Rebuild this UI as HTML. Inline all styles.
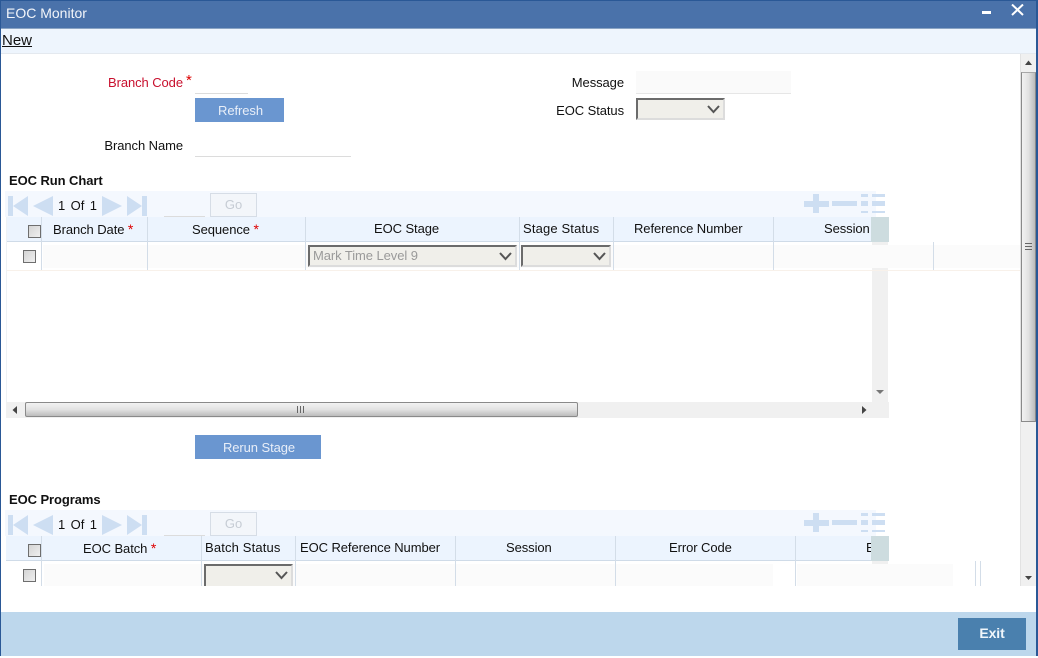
<!DOCTYPE html>
<html><head><meta charset="utf-8"><title>EOC Monitor</title>
<style>
html,body{margin:0;padding:0;background:#fff;}
body{width:1038px;height:658px;position:relative;overflow:hidden;font-family:"Liberation Sans",sans-serif;font-size:13px;letter-spacing:-0.08px;color:#111;}
.a,.t,.r,.c{position:absolute;}
.t,.r,.c{white-space:nowrap;line-height:16px;}
.r{text-align:right;}
.c{text-align:center;}
.red{color:#d00;font-size:14px;}
.sel{position:absolute;box-sizing:border-box;background:#f0efea;border-style:solid;border-width:2px;border-color:#6b6b6b #dcdcdc #dcdcdc #6b6b6b;}
.sel svg{position:absolute;top:5px;right:3px;}
.cb{position:absolute;box-sizing:border-box;width:13px;height:13px;border:1px solid #6e6e6e;background:linear-gradient(135deg,#d4d4d4,#efefef);}
.vl{position:absolute;width:1px;background:#d3dde8;}
.btn{position:absolute;background:#6a96d0;color:#e8eef8;text-align:center;font-size:13px;line-height:25px;padding-left:2px;box-sizing:border-box;}
</style></head><body>
<!-- window frame -->
<div class="a" style="left:0;top:0;width:1038px;height:28px;background:#4a72aa;border-top:1px solid #2a5896;box-sizing:border-box;"></div>
<div class="a" style="left:0;top:28px;width:1038px;height:1px;background:#8aa4c4;"></div>
<div class="t" style="left:6px;top:5px;color:#f2f5fa;font-size:14px;letter-spacing:0;">EOC Monitor</div>
<div class="a" style="left:982px;top:11px;width:9px;height:3px;background:#fff;"></div>
<svg class="a" style="left:1011px;top:4px;" width="13" height="12"><path d="M1 0.5L12 11M12 0.5L1 11" stroke="#fff" stroke-width="2" fill="none"/></svg>
<div class="a" style="left:0;top:29px;width:1038px;height:24px;background:#eef5fd;"></div>
<div class="a" style="left:0;top:53px;width:1038px;height:1px;background:#e4e9ef;"></div>
<div class="t" style="left:2px;top:33px;font-size:15px;letter-spacing:0;text-decoration:underline;color:#111;">New</div>
<div class="a" style="left:0;top:0;width:1px;height:656px;background:#2a5896;"></div>
<div class="a" style="left:1036px;top:0;width:2px;height:656px;background:#2a5896;"></div>

<!-- main scrollbar -->
<div class="a" style="left:1020px;top:54px;width:16px;height:532px;background:#f0f0f0;border-left:1px solid #e2e2e2;box-sizing:border-box;"></div>
<div class="a" style="left:1021px;top:72px;width:15px;height:350px;box-sizing:border-box;border:1px solid #8a8a8a;border-top-color:#a8a8a8;background:linear-gradient(90deg,#f2f2f2,#e2e2e2 50%,#bcbcbc);"></div>
<svg class="a" style="left:1024px;top:60px;" width="9" height="6"><path d="M4.5 0.5L8 5H1z" fill="#444"/></svg>
<svg class="a" style="left:1024px;top:575px;" width="9" height="6"><path d="M1 1H8L4.5 5z" fill="#444"/></svg>
<svg class="a" style="left:1025px;top:243px;" width="7" height="7"><path d="M0 .5H7M0 3.5H7M0 6.5H7" stroke="#666" stroke-width="1"/></svg>

<!-- form -->
<div class="r" style="right:855px;top:75px;color:#c8102e;">Branch Code</div>
<div class="t" style="left:186px;top:73px;color:#d00;font-size:15px;">*</div>
<div class="a" style="left:195px;top:93px;width:53px;height:1px;background:#dcdcdc;"></div>
<div class="btn" style="left:195px;top:98px;width:89px;height:24px;">Refresh</div>
<div class="r" style="right:855px;top:138px;">Branch Name</div>
<div class="a" style="left:195px;top:156px;width:156px;height:1px;background:#dcdcdc;"></div>
<div class="r" style="right:414px;top:75px;">Message</div>
<div class="a" style="left:636px;top:71px;width:155px;height:22px;background:#fafafa;border-bottom:1px solid #e6e6e6;"></div>
<div class="r" style="right:414px;top:103px;">EOC Status</div>
<div class="sel" style="left:636px;top:98px;width:89px;height:22px;"><svg width="13" height="9"><path d="M1 1L6.5 7L12 1" stroke="#555" stroke-width="2" fill="none"/></svg></div>

<!-- EOC Run Chart -->
<div class="t" style="left:9px;top:173px;font-weight:bold;font-size:13px;">EOC Run Chart</div>
<div class="a" style="left:5px;top:191px;width:871px;height:26px;background:#f4f8fe;"></div>
<svg class="a" style="left:8px;top:196px;" width="140" height="20" fill="#cddef2"><rect x="0" y="0" width="5" height="20"/><path d="M20 0V20L5 10z"/><path d="M45 0V20L25 10z"/><path d="M94 0V20L114 10z"/><path d="M119 0V20L134 10z"/><rect x="134" y="0" width="5" height="20"/></svg>
<div class="t" style="left:58px;top:198px;font-size:13px;word-spacing:2px;">1 Of 1</div>
<div class="a" style="left:164px;top:216px;width:41px;height:1px;background:#dcdcdc;"></div>
<div class="a" style="left:210px;top:193px;width:47px;height:24px;box-sizing:border-box;border:1px solid #d6dde6;background:#f3f6fa;color:#c6ccd4;text-align:center;line-height:22px;font-size:13px;">Go</div>
<svg class="a" style="left:804px;top:194px;" width="82" height="20" fill="#cddef2"><rect x="0" y="7" width="25" height="6"/><rect x="9" y="0" width="6" height="19"/><rect x="28" y="7" width="25" height="5"/><rect x="57" y="0" width="7" height="3"/><rect x="57" y="7" width="7" height="5"/><rect x="57" y="17" width="7" height="2"/><rect x="68" y="0" width="13" height="3"/><rect x="68" y="7" width="13" height="5"/><rect x="68" y="17" width="13" height="2"/></svg>

<div class="a" style="left:6px;top:217px;width:865px;height:24px;background:#ecf4fe;"></div>
<div class="a" style="left:6px;top:241px;width:865px;height:1px;background:#cfdbe8;"></div>
<div class="a" style="left:872px;top:242px;width:16px;height:160px;background:#f0f0f0;"></div>
<div class="a" style="left:43px;top:245px;width:977px;height:23px;background:#fbfbfb;"></div>
<div class="a" style="left:6px;top:270px;width:1014px;height:1px;background:#f8f1ea;"></div>
<div class="a" style="left:6px;top:217px;width:1px;height:186px;background:#eef1f4;"></div>
<div class="vl" style="left:41px;top:217px;height:53px;"></div>
<div class="vl" style="left:147px;top:217px;height:53px;"></div>
<div class="vl" style="left:305px;top:217px;height:53px;"></div>
<div class="vl" style="left:519px;top:217px;height:53px;"></div>
<div class="vl" style="left:613px;top:217px;height:53px;"></div>
<div class="vl" style="left:773px;top:217px;height:53px;"></div>
<div class="vl" style="left:933px;top:242px;height:28px;"></div>
<div class="cb" style="left:28px;top:225px;"></div>
<div class="cb" style="left:23px;top:250px;"></div>
<div class="t" style="left:53px;top:221px;">Branch Date <span class="red">*</span></div>
<div class="t" style="left:192px;top:221px;">Sequence <span class="red">*</span></div>
<div class="t" style="left:374px;top:221px;">EOC Stage</div>
<div class="t" style="left:523px;top:221px;letter-spacing:.15px;">Stage Status</div>
<div class="t" style="left:634px;top:221px;">Reference Number</div>
<div class="t" style="left:824px;top:221px;">Session</div>
<div class="a" style="left:871px;top:217px;width:18px;height:25px;background:#cddcdf;"></div>
<div class="sel" style="left:308px;top:245px;width:209px;height:22px;color:#9a9a9a;line-height:18px;padding-left:3px;">Mark Time Level 9<svg width="13" height="9"><path d="M1 1L6.5 7L12 1" stroke="#555" stroke-width="2" fill="none"/></svg></div>
<div class="sel" style="left:521px;top:245px;width:90px;height:22px;"><svg width="13" height="9"><path d="M1 1L6.5 7L12 1" stroke="#555" stroke-width="2" fill="none"/></svg></div>
<svg class="a" style="left:875px;top:389px;" width="10" height="6"><path d="M1 1H9L5 5z" fill="#777"/></svg>
<div class="a" style="left:6px;top:402px;width:883px;height:16px;background:#f0f0f0;"></div>
<div class="a" style="left:25px;top:402px;width:553px;height:15px;box-sizing:border-box;border:1px solid #8a8a8a;border-radius:2px;background:linear-gradient(180deg,#f2f2f2,#e2e2e2 50%,#bcbcbc);"></div>
<svg class="a" style="left:297px;top:406px;" width="8" height="7"><path d="M.5 0V7M3.5 0V7M6.5 0V7" stroke="#666" stroke-width="1"/></svg>
<svg class="a" style="left:12px;top:406px;" width="6" height="8"><path d="M5 0V8L0.5 4z" fill="#444"/></svg>
<svg class="a" style="left:861px;top:406px;" width="6" height="8"><path d="M1 0V8L5.5 4z" fill="#444"/></svg>

<div class="btn" style="left:195px;top:435px;width:126px;height:24px;">Rerun Stage</div>

<!-- EOC Programs -->
<div class="t" style="left:9px;top:492px;font-weight:bold;font-size:13px;">EOC Programs</div>
<div class="a" style="left:5px;top:510px;width:871px;height:26px;background:#f4f8fe;"></div>
<svg class="a" style="left:8px;top:515px;" width="140" height="20" fill="#cddef2"><rect x="0" y="0" width="5" height="20"/><path d="M20 0V20L5 10z"/><path d="M45 0V20L25 10z"/><path d="M94 0V20L114 10z"/><path d="M119 0V20L134 10z"/><rect x="134" y="0" width="5" height="20"/></svg>
<div class="t" style="left:58px;top:517px;font-size:13px;word-spacing:2px;">1 Of 1</div>
<div class="a" style="left:164px;top:535px;width:41px;height:1px;background:#dcdcdc;"></div>
<div class="a" style="left:210px;top:512px;width:47px;height:24px;box-sizing:border-box;border:1px solid #d6dde6;background:#f3f6fa;color:#c6ccd4;text-align:center;line-height:22px;font-size:13px;">Go</div>
<svg class="a" style="left:804px;top:513px;" width="82" height="20" fill="#cddef2"><rect x="0" y="7" width="25" height="6"/><rect x="9" y="0" width="6" height="19"/><rect x="28" y="7" width="25" height="5"/><rect x="57" y="0" width="7" height="3"/><rect x="57" y="7" width="7" height="5"/><rect x="57" y="17" width="7" height="2"/><rect x="68" y="0" width="13" height="3"/><rect x="68" y="7" width="13" height="5"/><rect x="68" y="17" width="13" height="2"/></svg>

<div class="a" style="left:6px;top:536px;width:865px;height:24px;background:#ecf4fe;"></div>
<div class="a" style="left:6px;top:560px;width:865px;height:1px;background:#cfdbe8;"></div>
<div class="a" style="left:872px;top:561px;width:16px;height:3px;background:#f0f0f0;"></div>
<div class="a" style="left:44px;top:564px;width:729px;height:22px;background:#fbfbfb;"></div>
<div class="a" style="left:797px;top:564px;width:156px;height:22px;background:#fbfbfb;"></div>
<div class="vl" style="left:41px;top:536px;height:50px;"></div>
<div class="vl" style="left:201px;top:536px;height:50px;"></div>
<div class="vl" style="left:295px;top:536px;height:50px;"></div>
<div class="vl" style="left:455px;top:536px;height:50px;"></div>
<div class="vl" style="left:615px;top:536px;height:50px;"></div>
<div class="vl" style="left:795px;top:536px;height:50px;"></div>
<div class="vl" style="left:975px;top:561px;height:25px;"></div>
<div class="vl" style="left:980px;top:561px;height:25px;"></div>
<div class="cb" style="left:28px;top:544px;"></div>
<div class="cb" style="left:23px;top:569px;"></div>
<div class="t" style="left:83px;top:540px;">EOC Batch <span class="red">*</span></div>
<div class="t" style="left:205px;top:540px;letter-spacing:.15px;">Batch Status</div>
<div class="t" style="left:300px;top:540px;">EOC Reference Number</div>
<div class="t" style="left:506px;top:540px;">Session</div>
<div class="t" style="left:669px;top:540px;">Error Code</div>
<div class="t" style="left:866px;top:540px;">E</div>
<div class="a" style="left:871px;top:536px;width:18px;height:25px;background:#cddcdf;"></div>
<div class="sel" style="left:204px;top:564px;width:89px;height:22px;border-bottom:0;"><svg width="13" height="9"><path d="M1 1L6.5 7L12 1" stroke="#555" stroke-width="2" fill="none"/></svg></div>

<!-- footer -->
<div class="a" style="left:1px;top:612px;width:1035px;height:44px;background:#bdd7ec;"></div>
<div class="a" style="left:958px;top:618px;width:68px;height:32px;background:#4a80ae;color:#f0f6fb;font-weight:bold;font-size:14px;text-align:center;line-height:31px;">Exit</div>
</body></html>
